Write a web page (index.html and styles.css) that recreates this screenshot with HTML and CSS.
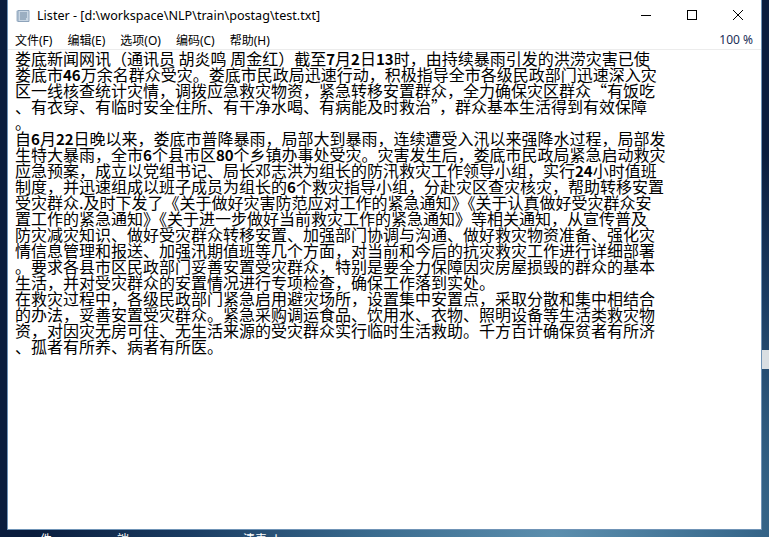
FILE: index.html
```html
<!DOCTYPE html>
<html lang="zh-CN">
<head>
<meta charset="utf-8">
<title>Lister</title>
<link rel="stylesheet" href="styles.css">
</head>
<body>
<div class="desktop">
  <div class="window">
    <div class="titlebar">
      <svg class="app-icon" width="16" height="16" viewBox="0 0 16 16">
        <path d="M3 2.5 H14 V13.5 H3 Z" fill="#c9d6e3" stroke="#8ea4bb" stroke-width="1"/>
        <path d="M1.5 3.5 Q1.5 2 3 2.5 L3 13.5 Q1.5 14 1.5 12.5 Z" fill="#9fb3c8"/>
        <path d="M5 5 H12 M5 7 H12 M5 9 H12 M5 11 H11" stroke="#6f87a0" stroke-width="1"/>
      </svg>
      <span class="title">Lister - [d:\workspace\NLP\train\postag\test.txt]</span>
      <div class="controls">
        <span class="ctl"><svg width="10" height="10" viewBox="0 0 10 10"><path d="M0 5.5 H10" stroke="#000" stroke-width="1"/></svg></span>
        <span class="ctl"><svg width="10" height="10" viewBox="0 0 10 10"><rect x="0.5" y="0.5" width="9" height="9" fill="none" stroke="#000" stroke-width="1"/></svg></span>
        <span class="ctl"><svg width="10" height="10" viewBox="0 0 10 10"><path d="M0 0 L10 10 M10 0 L0 10" stroke="#000" stroke-width="1"/></svg></span>
      </div>
    </div>
    <div class="menubar">
      <span class="menu">文件(F)</span>
      <span class="menu">编辑(E)</span>
      <span class="menu">选项(O)</span>
      <span class="menu">编码(C)</span>
      <span class="menu">帮助(H)</span>
      <span class="zoom">100 %</span>
    </div>
    <div class="content">
      <div class="line">娄底新闻网讯（通讯员 胡炎鸣 周金红）截至<b class="num">7</b>月<b class="num">2</b>日<b class="num">13</b>时，由持续暴雨引发的洪涝灾害已使</div>
      <div class="line">娄底市<b class="num">46</b>万余名群众受灾。娄底市民政局迅速行动，积极指导全市各级民政部门迅速深入灾</div>
      <div class="line">区一线核查统计灾情，调拨应急救灾物资，紧急转移安置群众，全力确保灾区群众“有饭吃</div>
      <div class="line">、有衣穿、有临时安全住所、有干净水喝、有病能及时救治”，群众基本生活得到有效保障</div>
      <div class="line">。</div>
      <div class="line">自<b class="num">6</b>月<b class="num">22</b>日晚以来，娄底市普降暴雨，局部大到暴雨，连续遭受入汛以来强降水过程，局部发</div>
      <div class="line">生特大暴雨，全市<b class="num">6</b>个县市区<b class="num">80</b>个乡镇办事处受灾。灾害发生后，娄底市民政局紧急启动救灾</div>
      <div class="line">应急预案，成立以党组书记、局长邓志洪为组长的防汛救灾工作领导小组，实行<b class="num">24</b>小时值班</div>
      <div class="line">制度，并迅速组成以班子成员为组长的<b class="num">6</b>个救灾指导小组，分赴灾区查灾核灾，帮助转移安置</div>
      <div class="line">受灾群众.及时下发了《关于做好灾害防范应对工作的紧急通知》《关于认真做好受灾群众安</div>
      <div class="line">置工作的紧急通知》《关于进一步做好当前救灾工作的紧急通知》等相关通知，从宣传普及</div>
      <div class="line">防灾减灾知识、做好受灾群众转移安置、加强部门协调与沟通、做好救灾物资准备、强化灾</div>
      <div class="line">情信息管理和报送、加强汛期值班等几个方面，对当前和今后的抗灾救灾工作进行详细部署</div>
      <div class="line">。要求各县市区民政部门妥善安置受灾群众，特别是要全力保障因灾房屋损毁的群众的基本</div>
      <div class="line">生活，并对受灾群众的安置情况进行专项检查，确保工作落到实处。</div>
      <div class="line">在救灾过程中，各级民政部门紧急启用避灾场所，设置集中安置点，采取分散和集中相结合</div>
      <div class="line">的办法，妥善安置受灾群众。紧急采购调运食品、饮用水、衣物、照明设备等生活类救灾物</div>
      <div class="line">资，对因灾无房可住、无生活来源的受灾群众实行临时生活救助。千方百计确保贫者有所济</div>
      <div class="line">、孤者有所养、病者有所医。</div>
    </div>
  </div>
  <div class="icons">
    <span class="label l1">件</span>
    <span class="label l2">端</span>
    <span class="label l3">清表.doc</span>
  </div>
  <div class="side-edge"></div>
</div>
</body>
</html>
```

FILE: styles.css
```css
html, body {
  margin: 0;
  padding: 0;
}
body {
  width: 769px;
  height: 537px;
  overflow: hidden;
}
.desktop {
  position: relative;
  width: 769px;
  height: 537px;
  overflow: hidden;
  background: radial-gradient(ellipse 520px 420px at 72% 100%, #5c8fae 0%, #3a6b8e 35%, #1a3c62 70%, #0a1d3d 100%),
              #0a1d3d;
  padding-left: 7px;
  box-sizing: border-box;
}
.window {
  width: 755px;
  height: 530px;
  background: #fff;
  border: 1px solid #6f93b6;
  border-top: none;
  box-sizing: border-box;
  display: flex;
  flex-direction: column;
}
.titlebar {
  height: 30px;
  display: flex;
  align-items: center;
  padding-left: 7px;
  font-family: "Noto Sans", "Open Sans", sans-serif;
  font-size: 12.6px;
  color: #000;
}
.app-icon {
  flex: none;
  margin-right: 6px;
  margin-top: 1px;
}
.title {
  flex: 1;
  white-space: nowrap;
}
.controls {
  display: flex;
  height: 30px;
}
.ctl {
  width: 46px;
  height: 30px;
  display: flex;
  align-items: center;
  justify-content: center;
}
.menubar {
  height: 19px;
  display: flex;
  align-items: center;
  padding-left: 7px;
  padding-right: 8px;
  border-bottom: 1px solid #ececec;
  font-family: "Noto Sans", "Noto Sans CJK SC", sans-serif;
  font-size: 12px;
  color: #000;
}
.menu {
  margin-right: 15px;
  white-space: nowrap;
}
.zoom {
  margin-left: auto;
  color: #1b2f57;
}
.content {
  flex: 1;
  padding-left: 7px;
  font-family: "Noto Sans CJK SC", "Noto Sans", sans-serif;
  font-size: 16px;
  line-height: 16px;
  color: #000;
  overflow: hidden;
}
.line {
  white-space: pre;
  height: 16px;
}
.num {
  font-weight: 700;
  font-size: 15px;
}
.icons {
  display: flex;
  height: 7px;
  overflow: hidden;
  margin-top: 2px;
  font-family: "Noto Sans CJK SC", sans-serif;
  font-size: 12px;
  line-height: 14px;
  color: #fff;
}
.label {
  white-space: nowrap;
}
.l1 { margin-left: 33px; }
.l2 { margin-left: 65px; }
.l3 { margin-left: 114px; }
.side-edge {
  position: absolute;
  left: 762px;
  top: 350px;
  width: 7px;
  height: 19px;
  background: #d9dee2;
}
```
